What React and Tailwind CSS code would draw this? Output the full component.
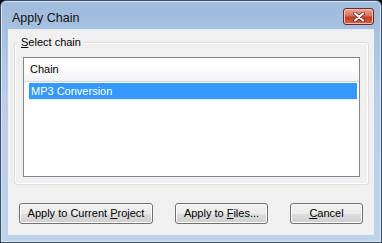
import React from 'react';

const FONT = { fontFamily: '"Liberation Sans", Arial, sans-serif' };

function Btn({ children, className = '' }) {
  return (
    <button
      type="button"
      className={`h-[21px] rounded-[3px] border border-[#707070] bg-[linear-gradient(to_bottom,#f2f2f2_0%,#ebebeb_50%,#dddddd_51%,#cfcfcf_100%)] text-[11px] text-black shadow-[inset_0_0_0_1px_#fcfcfc] ${className}`}
    >
      {children}
    </button>
  );
}

export default function App() {
  return (
    <div className="w-[382px] h-[243px] bg-black" style={FONT}>
      <div className="w-full h-full flex flex-col rounded-t-[6px] border border-[#3c4d62] bg-[linear-gradient(to_bottom,#9fbbdb_0%,#b7cfe9_40%,#bcd3ec_100%)] shadow-[inset_0_0_0_1px_#dbe7f4]">
        {/* Title bar */}
        <div className="h-[29px] flex items-center pl-[11px] pr-[7px]">
          <span className="text-[12.5px] text-[#111] pt-[6px]">Apply Chain</span>
          <div className="ml-auto mt-[2px] w-[31px] h-[17px] rounded-[3px] border border-[#6b2a24] bg-[linear-gradient(to_bottom,#eba595_0%,#d9705a_45%,#c43c24_55%,#d2664a_100%)] flex items-center justify-center shadow-[inset_0_0_0_1px_#f0c0b4]">
            <svg width="12" height="10" viewBox="0 0 12 10">
              <path d="M2 1.5 L10 8.5 M10 1.5 L2 8.5" stroke="#5a1a12" strokeWidth="3.6" strokeLinecap="round" />
              <path d="M2 1.5 L10 8.5 M10 1.5 L2 8.5" stroke="#ffffff" strokeWidth="2.2" strokeLinecap="round" />
            </svg>
          </div>
        </div>

        {/* Client area */}
        <div className="mx-[7px] h-[205px] bg-[#f0f0f0] shadow-[0_-1px_0_#e4ecf5] relative">
          {/* Group box */}
          <div className="absolute left-[6px] top-[12px] w-[355px] h-[143px] rounded-[3px] border border-[#d5dfe5] shadow-[inset_0_0_0_1px_#ffffff]">
            <span className="absolute left-[4px] top-[-7px] bg-[#f0f0f0] px-[2px] text-[11px] leading-[13px] text-black">
              <span className="underline">S</span>elect chain
            </span>
          </div>

          {/* List */}
          <div className="absolute left-[15px] top-[27px] w-[337px] h-[120px] border border-[#828790] bg-white">
            <div className="h-[24px] flex items-center pl-[6px] text-[11px] text-black bg-[linear-gradient(to_bottom,#ffffff_0%,#ffffff_40%,#f1f2f4_100%)] border-b border-[#d5d5d5]">
              Chain
            </div>
            <div className="ml-[5px] mr-[2px] mt-[1px] h-[16px] flex items-center pl-[2px] bg-[#3399ff] text-white text-[11px]">
              MP3 Conversion
            </div>
            <div className="ml-[5px] mr-[2px] h-px bg-[#f0f0f0]" />
          </div>

          {/* Buttons */}
          <div className="absolute left-[11px] top-[173px] flex">
            <Btn className="w-[134px]">
              Apply to Current <span className="underline">P</span>roject
            </Btn>
            <Btn className="w-[93px] ml-[22px]">
              Apply to <span className="underline">F</span>iles...
            </Btn>
            <Btn className="w-[73px] ml-[22px]">
              <span className="underline">C</span>ancel
            </Btn>
          </div>
        </div>
      </div>
    </div>
  );
}
